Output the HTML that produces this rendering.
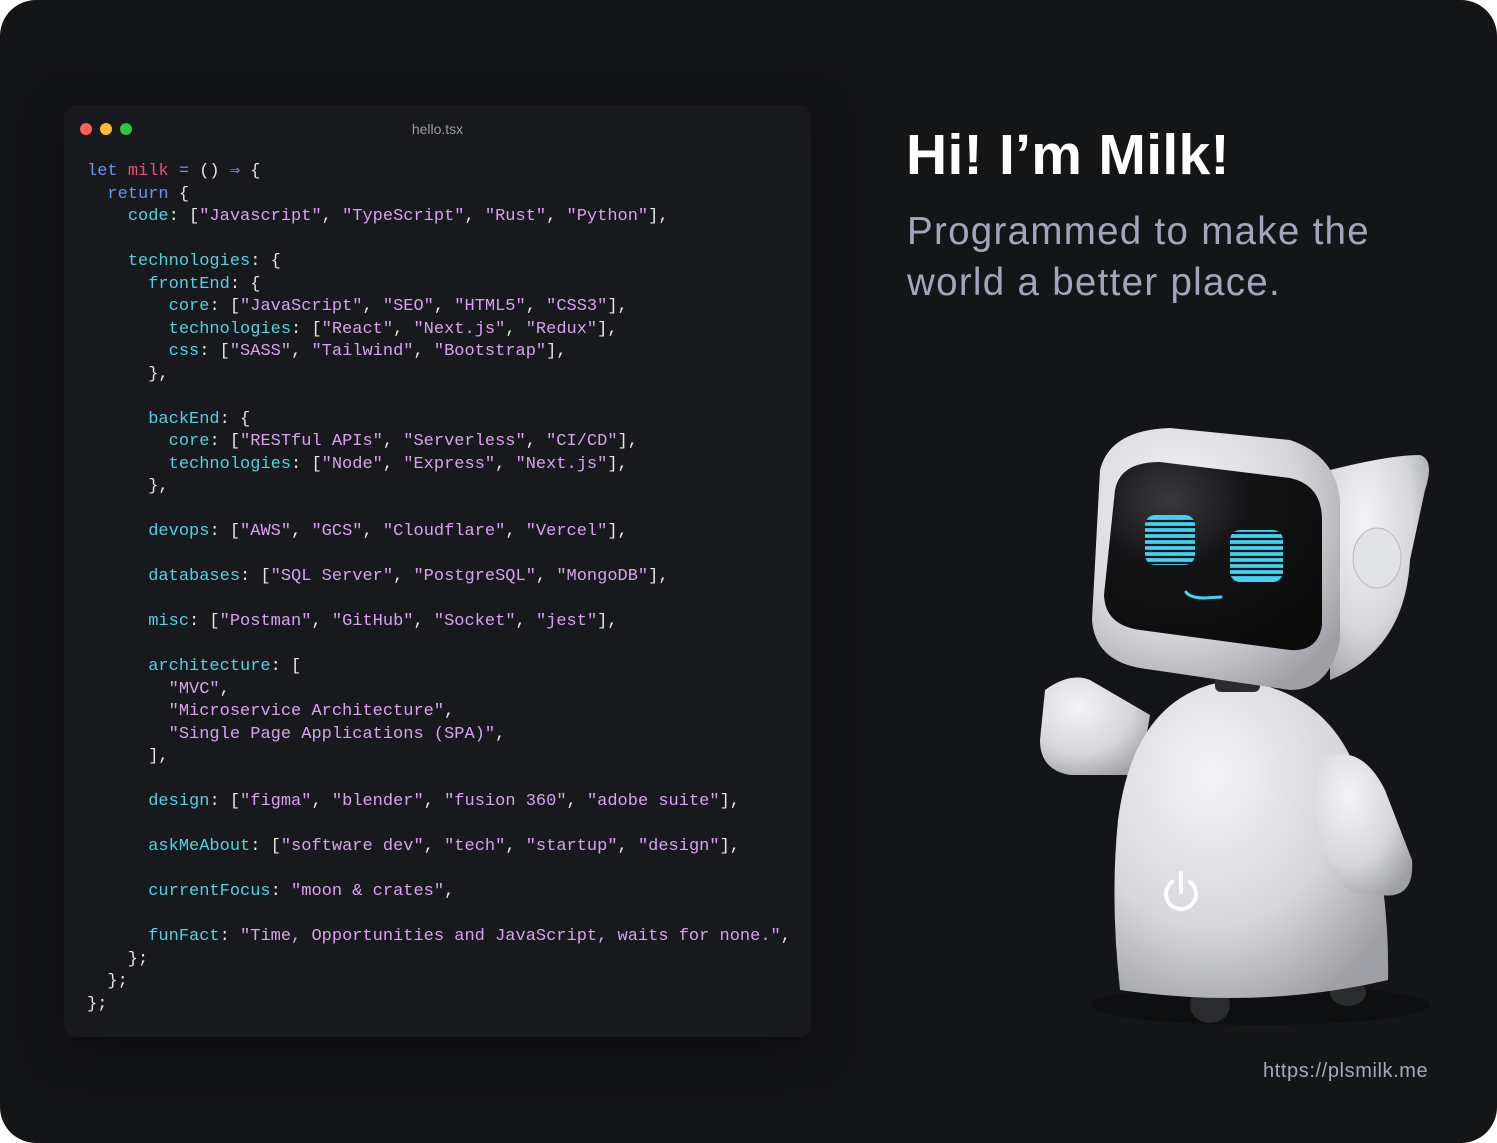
<!DOCTYPE html>
<html><head><meta charset="utf-8"><style>
html,body{margin:0;padding:0;background:#fff;}
.wrap{position:relative;width:1497px;height:1143px;background:#141517;border-radius:36px;overflow:hidden;font-family:"Liberation Sans",sans-serif;}
.win{position:absolute;left:64px;top:105px;width:747px;height:932px;background:#18191c;border-radius:12px;box-shadow:0 10px 40px rgba(0,0,0,.5);}
.dot{position:absolute;top:18px;width:12px;height:12px;border-radius:50%;}
.title{position:absolute;top:16px;left:0;width:747px;text-align:center;color:#9a9ba0;font-size:14px;}
pre{position:absolute;left:23px;top:56px;margin:0;font-family:"Liberation Mono","DejaVu Sans Mono",monospace;font-size:17px;line-height:22.5px;color:#e6e6e6;}
.k{color:#6b93f2}.p{color:#ec4d79}.c{color:#4fd3df}.s{color:#d8a2ee}
h1{position:absolute;left:906px;top:122px;margin:0;color:#fff;font-size:57px;font-weight:bold;letter-spacing:0.3px;}
.sub{position:absolute;left:907px;top:206px;color:#a3a6ba;font-size:38.5px;line-height:51px;letter-spacing:1.3px;}
.url{position:absolute;left:1263px;top:1060px;color:#a7a9bb;font-size:20px;letter-spacing:0.6px;}
</style></head><body><div class="wrap">
<div class="win">
<div class="dot" style="left:16px;background:#fe5f57"></div>
<div class="dot" style="left:36px;background:#febc2e"></div>
<div class="dot" style="left:56px;background:#28c840"></div>
<div class="title">hello.tsx</div>
<pre><span class="k">let</span> <span class="p">milk</span> <span class="k">=</span> () <span class="k">⇒</span> {
  <span class="k">return</span> {
    <span class="c">code</span>: [<span class="s">"Javascript"</span>, <span class="s">"TypeScript"</span>, <span class="s">"Rust"</span>, <span class="s">"Python"</span>],

    <span class="c">technologies</span>: {
      <span class="c">frontEnd</span>: {
        <span class="c">core</span>: [<span class="s">"JavaScript"</span>, <span class="s">"SEO"</span>, <span class="s">"HTML5"</span>, <span class="s">"CSS3"</span>],
        <span class="c">technologies</span>: [<span class="s">"React"</span>, <span class="s">"Next.js"</span>, <span class="s">"Redux"</span>],
        <span class="c">css</span>: [<span class="s">"SASS"</span>, <span class="s">"Tailwind"</span>, <span class="s">"Bootstrap"</span>],
      },

      <span class="c">backEnd</span>: {
        <span class="c">core</span>: [<span class="s">"RESTful APIs"</span>, <span class="s">"Serverless"</span>, <span class="s">"CI/CD"</span>],
        <span class="c">technologies</span>: [<span class="s">"Node"</span>, <span class="s">"Express"</span>, <span class="s">"Next.js"</span>],
      },

      <span class="c">devops</span>: [<span class="s">"AWS"</span>, <span class="s">"GCS"</span>, <span class="s">"Cloudflare"</span>, <span class="s">"Vercel"</span>],

      <span class="c">databases</span>: [<span class="s">"SQL Server"</span>, <span class="s">"PostgreSQL"</span>, <span class="s">"MongoDB"</span>],

      <span class="c">misc</span>: [<span class="s">"Postman"</span>, <span class="s">"GitHub"</span>, <span class="s">"Socket"</span>, <span class="s">"jest"</span>],

      <span class="c">architecture</span>: [
        <span class="s">"MVC"</span>,
        <span class="s">"Microservice Architecture"</span>,
        <span class="s">"Single Page Applications (SPA)"</span>,
      ],

      <span class="c">design</span>: [<span class="s">"figma"</span>, <span class="s">"blender"</span>, <span class="s">"fusion 360"</span>, <span class="s">"adobe suite"</span>],

      <span class="c">askMeAbout</span>: [<span class="s">"software dev"</span>, <span class="s">"tech"</span>, <span class="s">"startup"</span>, <span class="s">"design"</span>],

      <span class="c">currentFocus</span>: <span class="s">"moon &amp; crates"</span>,

      <span class="c">funFact</span>: <span class="s">"Time, Opportunities and JavaScript, waits for none."</span>,
    };
  };
};</pre>
</div>
<h1>Hi! I’m Milk!</h1>
<div class="sub">Programmed to make the<br>world a better place.</div>
<div class="url">https://plsmilk.me</div>
<svg width="1497" height="1143" style="position:absolute;left:0;top:0">
<defs>
<radialGradient id="w" cx="35%" cy="30%" r="80%"><stop offset="0" stop-color="#f4f4f6"/><stop offset=".6" stop-color="#d6d7db"/><stop offset="1" stop-color="#9fa0a5"/></radialGradient>
<radialGradient id="scr" cx="30%" cy="20%" r="90%"><stop offset="0" stop-color="#3a3a3c"/><stop offset=".4" stop-color="#141416"/><stop offset="1" stop-color="#0b0b0c"/></radialGradient>
<clipPath id="eyes"><rect x="1145" y="515" width="50" height="50" rx="10"/><rect x="1230" y="530" width="53" height="52" rx="10"/></clipPath>
</defs>
<ellipse cx="1260" cy="1005" rx="170" ry="20" fill="#0e0f10"/>
<ellipse cx="1210" cy="1005" rx="20" ry="18" fill="#2a2b2d"/>
<ellipse cx="1348" cy="992" rx="18" ry="14" fill="#2a2b2d"/>
<path d="M1045 690 Q1070 672 1090 680 L1150 715 L1140 775 L1070 775 Q1040 770 1040 740 Z" fill="url(#w)"/>
<path d="M1120 990 Q1110 900 1118 820 Q1135 690 1235 680 Q1330 690 1360 780 Q1390 880 1388 980 Q1260 1010 1120 990 Z" fill="url(#w)"/>
<path d="M1320 760 Q1360 740 1385 790 L1412 860 Q1415 900 1380 895 L1350 892 Q1320 860 1315 800 Z" fill="url(#w)"/>
<rect x="1215" y="672" width="45" height="20" rx="6" fill="#2b2c2e"/>
<path d="M1330 470 Q1390 455 1420 455 Q1435 460 1425 490 L1410 560 Q1405 650 1330 680 Z" fill="url(#w)"/>
<path d="M1100 470 Q1110 430 1170 428 L1290 440 Q1335 455 1340 500 L1340 640 Q1330 690 1290 690 L1140 668 Q1095 660 1092 620 Z" fill="url(#w)"/>
<path d="M1115 490 Q1120 462 1160 462 L1290 478 Q1322 485 1322 520 L1322 625 Q1318 652 1290 650 L1140 630 Q1105 625 1104 595 Z" fill="url(#scr)"/>
<ellipse cx="1377" cy="558" rx="24" ry="30" fill="#e2e3e6" stroke="#b9babe"/>
<g clip-path="url(#eyes)">
<rect x="1140" y="510" width="150" height="80" fill="#3fd3f4"/>
<g stroke="#0e0f10" stroke-width="2.2">
<path d="M1140 521h150M1140 527h150M1140 533h150M1140 539h150M1140 545h150M1140 551h150M1140 557h150M1140 563h150M1140 569h150M1140 575h150"/>
</g>
</g>
<path d="M1186 592 Q1190 598 1205 598 L1221 597" stroke="#3fd3f4" stroke-width="3" fill="none" stroke-linecap="round"/>
<g stroke="#fff" stroke-width="4" fill="none" stroke-linecap="round" opacity=".95">
<path d="M1172 882 A15 15 0 1 0 1190 882"/><path d="M1181 873 V892"/>
</g>
</svg>
</div></body></html>
